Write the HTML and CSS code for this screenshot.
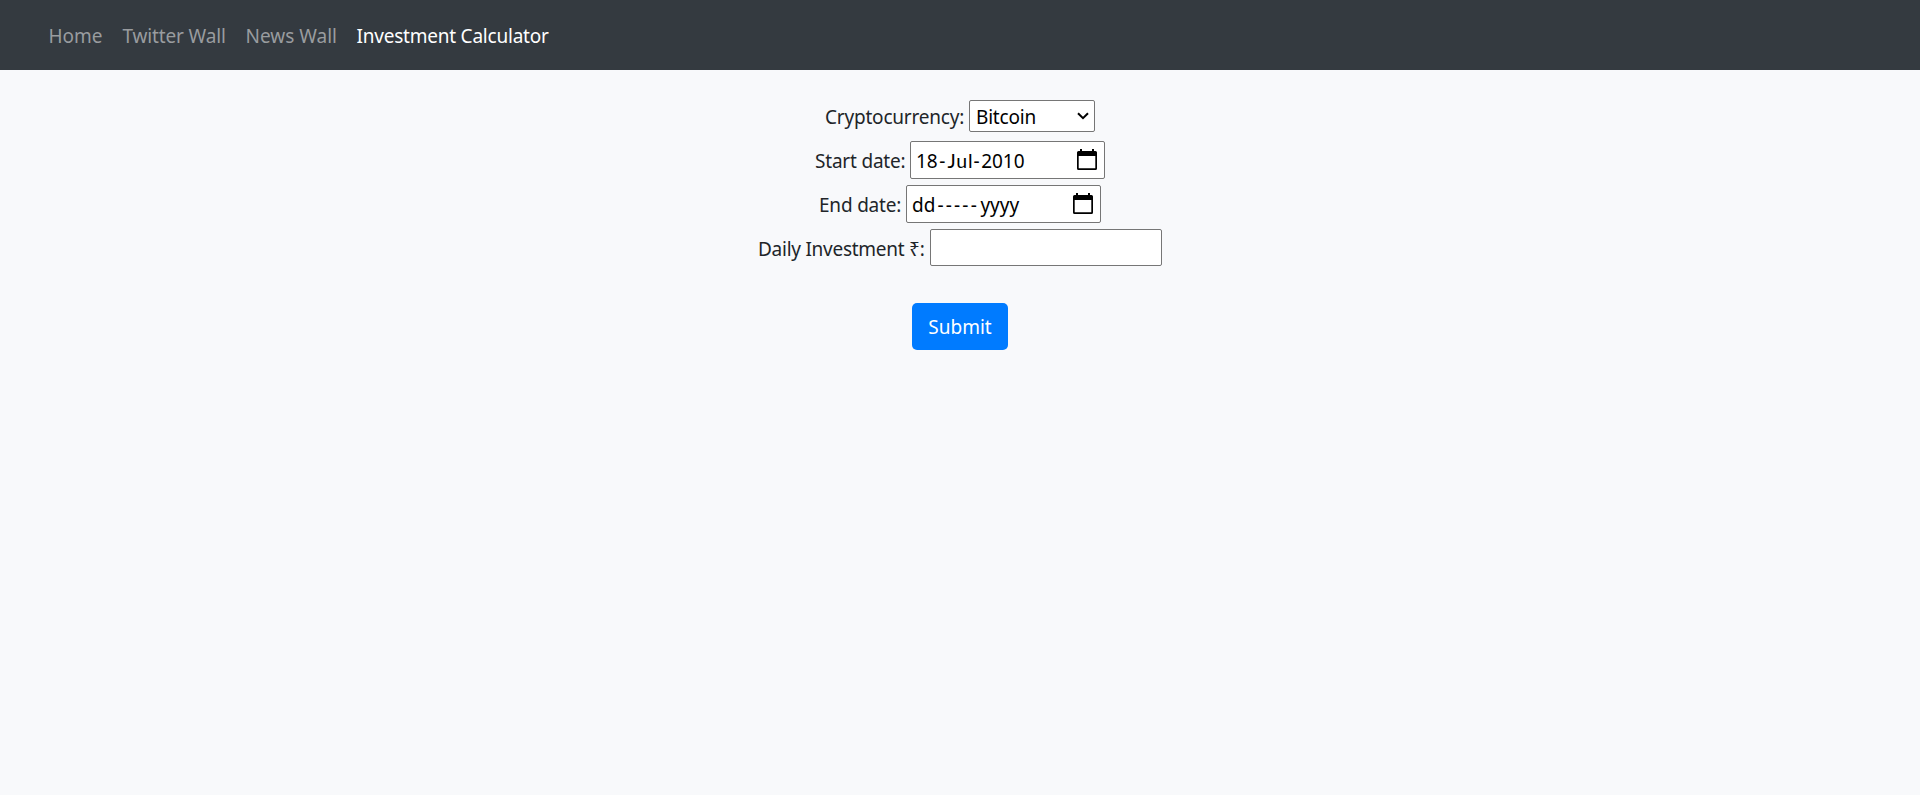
FILE: index.html
```html
<!DOCTYPE html>
<html lang="en">
<head>
<meta charset="utf-8">
<title>Investment Calculator</title>
<link rel="stylesheet" href="styles.css">
</head>
<body>
<nav class="navbar">
  <a class="nav-link home">Home</a>
  <a class="nav-link twitter">Twitter Wall</a>
  <a class="nav-link news">News Wall</a>
  <a class="nav-link active">Investment Calculator</a>
</nav>
<form class="calculator">
  <div class="row">
    <label class="label-crypto">Cryptocurrency:</label>
    <div class="control select"><span class="bitcoin">Bitcoin</span>
      <svg class="chevron" width="12" height="8" viewBox="0 0 12 8"><path d="M1 1.2 6 6.2 11 1.2" fill="none" stroke="#000" stroke-width="2"/></svg>
    </div>
  </div>
  <div class="row">
    <label class="label-start">Start date:</label>
    <div class="control date"><div class="value"><span>18</span><span class="hyphen">-</span><span class="month">Jul</span><span class="hyphen">-</span><span>2010</span></div>
      <svg width="20" height="22" viewBox="0 0 20 22"><path d="M3 0h2v2h10V0h2v2h1.500Q20 2 20 3.500V19.500Q20 21 18.500 21h-17Q0 21 0 19.500V3.500Q0 2 1.500 2H3ZM1.700 7v12.300h16.600V7Z" fill-rule="evenodd"/></svg>
    </div>
  </div>
  <div class="row">
    <label class="label-end">End date:</label>
    <div class="control date"><span>dd</span><span class="dashes">-----</span><span>yyyy</span>
      <svg width="20" height="22" viewBox="0 0 20 22"><path d="M3 0h2v2h10V0h2v2h1.500Q20 2 20 3.500V19.500Q20 21 18.500 21h-17Q0 21 0 19.500V3.500Q0 2 1.500 2H3ZM1.700 7v12.300h16.600V7Z" fill-rule="evenodd"/></svg>
    </div>
  </div>
  <div class="row">
    <label class="label-daily">Daily Investment ₹:</label>
    <input class="control amount" type="text">
  </div>
  <button class="submit" type="button"><span>Submit</span></button>
</form>
</body>
</html>
```
FILE: styles.css
```css
* { box-sizing: border-box; }
body {
  margin: 0;
  min-height: 795px;
  background: #f8f9fb;
  color: #212529;
  font: 19px/30px "Segoe UI", "Noto Sans", "Open Sans", sans-serif;
  white-space: nowrap;
}
.navbar {
  display: flex;
  height: 70px;
  padding: 21px 0 0 48.5px;
  background: #343a40;
}
.nav-link { color: #999c9f; }
.home { width: 74px; }
.twitter { width: 123px; letter-spacing: -0.14px; }
.news { width: 111px; }
.nav-link.active { color: #fff; letter-spacing: -0.22px; }
.calculator {
  display: flex;
  flex-direction: column;
  align-items: center;
  padding-top: 24px;
}
.row { display: flex; align-items: center; height: 44px; }
.row label { padding-top: 2px; letter-spacing: -0.2px; }
.label-crypto { width: 144px; }
.label-start { width: 95px; }
.label-end { width: 87px; }
.row .label-daily { width: 172px; letter-spacing: -0.26px; }
.control {
  display: flex;
  align-items: center;
  height: 38px;
  border: 1px solid #767676;
  border-radius: 2px;
  background: #fff;
  color: #000;
}
.select { width: 126px; height: 32px; padding: 2px 5px 0 6px; }
.bitcoin { letter-spacing: -0.2px; }
.chevron { margin: -3px 0 0 auto; }
.date { width: 195px; padding: 2px 7px 0 5px; }
.date svg { margin: -3px 0 0 auto; }
.value { display: flex; align-items: baseline; }
.hyphen { width: 9.2px; text-align: center; }
.month { width: 25px; padding-left: 0.6px; font-family: "Segoe UI", Lato, sans-serif; font-size: 19.5px; letter-spacing: 0.8px; }
.dashes { width: 43px; margin-left: 2px; letter-spacing: 2.2px; }
.amount { width: 232px; height: 37px; margin: 0 0 1px; }
.submit {
  width: 96px;
  height: 47px;
  margin-top: 33px;
  padding: 0;
  border: 0;
  border-radius: 5px;
  background: #007bff;
  color: #fff;
  font: inherit;
}
```
